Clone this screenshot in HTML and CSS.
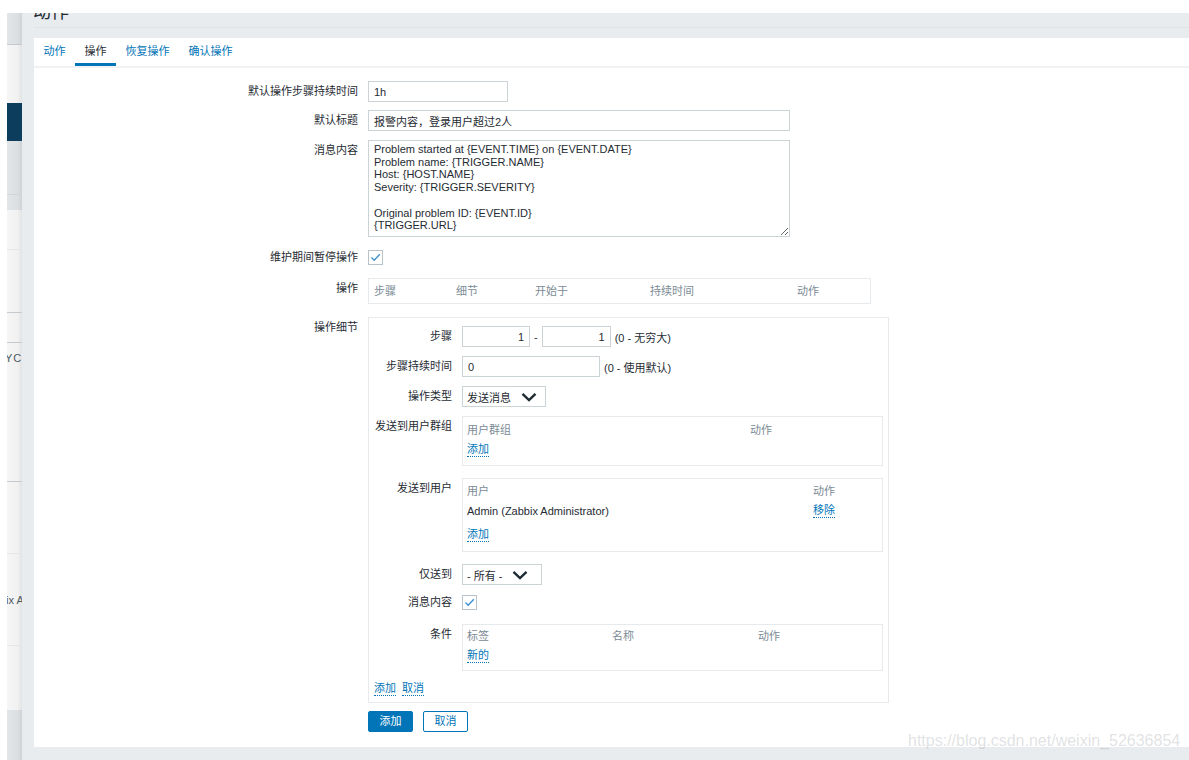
FILE: index.html
```html
<!DOCTYPE html>
<html lang="zh-CN">
<head>
<meta charset="utf-8">
<title>动作</title>
<link rel="stylesheet" href="styles.css">
</head>
<body>
<div class="page">
  <aside class="sidebar">
    <div class="sb sb-gray sb-h31 sb-line-dark"></div>
    <div class="sb sb-light sb-h58"></div>
    <div class="sb sb-blue"></div>
    <div class="sb sb-gray sb-h53 sb-line-mid"></div>
    <div class="sb sb-gray sb-h15"></div>
    <div class="sb sb-light sb-h39 sb-line-faint"></div>
    <div class="sb sb-light sb-h62 sb-line-dark"></div>
    <div class="sb sb-light sb-h29 sb-line-dark"></div>
    <div class="sb sb-light sb-h138 sb-line-dark"><span class="sb-text sb-text-1">YCl</span></div>
    <div class="sb sb-light sb-h71 sb-line-faint"></div>
    <div class="sb sb-light sb-h91 sb-line-faint"><span class="sb-text sb-text-2">ix A</span></div>
    <div class="sb sb-light sb-h64"></div>
    <div class="sb sb-gray sb-fill"></div>
  </aside>

  <main class="content">
    <header class="page-header"><h1 class="title">动作</h1></header>
    <div class="header-gap"></div>

    <section class="panel">
      <ul class="tabs">
        <li class="tab">动作</li>
        <li class="tab active">操作</li>
        <li class="tab">恢复操作</li>
        <li class="tab">确认操作</li>
      </ul>

      <div class="form">
        <div class="row">
          <div class="label">默认操作步骤持续时间</div>
          <div class="field"><input class="input w-140" value="1h" readonly></div>
        </div>

        <div class="row mt-8">
          <div class="label">默认标题</div>
          <div class="field"><input class="input w-422" value="报警内容，登录用户超过2人" readonly></div>
        </div>

        <div class="row mt-9">
          <div class="label">消息内容</div>
          <div class="field"><textarea class="textarea" readonly>Problem started at {EVENT.TIME} on {EVENT.DATE}
Problem name: {TRIGGER.NAME}
Host: {HOST.NAME}
Severity: {TRIGGER.SEVERITY}

Original problem ID: {EVENT.ID}
{TRIGGER.URL}</textarea></div>
        </div>

        <div class="row mt-10">
          <div class="label">维护期间暂停操作</div>
          <div class="field">
            <span class="checkbox"><svg width="13" height="13" viewBox="0 0 13 13"><polyline points="2.5,6.5 5.2,9.3 10.8,3.2" fill="none" stroke="#3b8fd0" stroke-width="1.3"/></svg></span>
          </div>
        </div>

        <div class="row mt-10">
          <div class="label">操作</div>
          <div class="field">
            <div class="box ops">
              <span class="th w-82">步骤</span><span class="th w-79">细节</span><span class="th w-115">开始于</span><span class="th w-147">持续时间</span><span class="th">动作</span>
            </div>
          </div>
        </div>

        <div class="row mt-13">
          <div class="label">操作细节</div>
          <div class="field">
            <div class="details">
              <div class="drow">
                <div class="label">步骤</div>
                <div class="field inline">
                  <input class="input num w-68" value="1" readonly><span class="dash">-</span><input class="input num w-69" value="1" readonly><span class="hint">(0 - 无穷大)</span>
                </div>
              </div>

              <div class="drow mt-9">
                <div class="label">步骤持续时间</div>
                <div class="field inline">
                  <input class="input w-138" value="0" readonly><span class="hint">(0 - 使用默认)</span>
                </div>
              </div>

              <div class="drow mt-9">
                <div class="label">操作类型</div>
                <div class="field">
                  <div class="select select-type"><span>发送消息</span><svg width="16" height="10" viewBox="0 0 16 10"><polyline points="1.5,1.8 8,8 14.5,1.8" fill="none" stroke="#1f2c33" stroke-width="2.4"/></svg></div>
                </div>
              </div>

              <div class="drow mt-9">
                <div class="label">发送到用户群组</div>
                <div class="field">
                  <div class="box inner group">
                    <div class="trow"><span class="th w-283">用户群组</span><span class="th">动作</span></div>
                    <div class="trow"><a class="link">添加</a></div>
                  </div>
                </div>
              </div>

              <div class="drow mt-12">
                <div class="label">发送到用户</div>
                <div class="field">
                  <div class="box inner users">
                    <div class="trow"><span class="th w-346">用户</span><span class="th">动作</span></div>
                    <div class="trow"><span class="td w-346">Admin (Zabbix Administrator)</span><a class="link">移除</a></div>
                    <div class="trow mt-4"><a class="link">添加</a></div>
                  </div>
                </div>
              </div>

              <div class="drow mt-12">
                <div class="label">仅送到</div>
                <div class="field">
                  <div class="select select-to"><span>- 所有 -</span><svg width="16" height="10" viewBox="0 0 16 10"><polyline points="1.5,1.8 8,8 14.5,1.8" fill="none" stroke="#1f2c33" stroke-width="2.4"/></svg></div>
                </div>
              </div>

              <div class="drow mt-7">
                <div class="label">消息内容</div>
                <div class="field">
                  <span class="checkbox"><svg width="13" height="13" viewBox="0 0 13 13"><polyline points="2.5,6.5 5.2,9.3 10.8,3.2" fill="none" stroke="#3b8fd0" stroke-width="1.3"/></svg></span>
                </div>
              </div>

              <div class="drow mt-11">
                <div class="label">条件</div>
                <div class="field">
                  <div class="box inner conds">
                    <div class="trow"><span class="th w-145">标签</span><span class="th w-146">名称</span><span class="th">动作</span></div>
                    <div class="trow"><a class="link">新的</a></div>
                  </div>
                </div>
              </div>

              <div class="links mt-11"><a class="link">添加</a><a class="link">取消</a></div>
            </div>
          </div>
        </div>

        <div class="row mt-8">
          <div class="label"></div>
          <div class="field buttons">
            <button class="btn btn-primary" type="button">添加</button>
            <button class="btn btn-secondary" type="button">取消</button>
          </div>
        </div>
      </div>
    </section>
  </main>
</div>
<div class="watermark">https://blog.csdn.net/weixin_52636854</div>
</body>
</html>
```

FILE: styles.css
```css
* { box-sizing: border-box; }

html, body {
  margin: 0;
  padding: 0;
}

body {
  width: 1189px;
  height: 760px;
  overflow: hidden;
  position: relative;
  background: #ffffff;
  font-family: "Liberation Sans", Arial, "Noto Sans CJK SC", sans-serif;
  font-size: 11px;
  color: #1f2c33;
}

.page {
  display: flex;
  margin-top: 13px;
  margin-left: 7px;
  height: 747px;
}

/* ---------- left sidebar strip ---------- */
.sidebar {
  width: 15px;
  flex: none;
  display: flex;
  flex-direction: column;
}

.sb { flex: none; overflow: hidden; white-space: nowrap; }
.sb-light { background: linear-gradient(to right, #f6f6f6 0%, #f1f1f1 70%, #e2e3e4 100%); }
.sb-gray { background: linear-gradient(to right, #e3e6e8 0%, #dcdfe2 70%, #cfd3d6 100%); }
.sb-blue { background: #0c3d5c; height: 38px; }
.sb-fill { flex: 1; }
.sb-line-dark { border-bottom: 1px solid #c5cace; }
.sb-line-mid { border-bottom: 1px solid #d2d6d9; }
.sb-line-faint { border-bottom: 1px solid #e4e6e8; }
.sb-h15 { height: 15px; }
.sb-h29 { height: 30px; }
.sb-h31 { height: 32px; }
.sb-h39 { height: 40px; }
.sb-h53 { height: 54px; }
.sb-h58 { height: 58px; }
.sb-h62 { height: 63px; }
.sb-h64 { height: 64px; }
.sb-h71 { height: 72px; }
.sb-h91 { height: 92px; }
.sb-h138 { height: 139px; }

.sb-text {
  display: block;
  font-size: 11px;
  line-height: 12px;
  color: #4b5862;
}
.sb-text-1 { margin-top: 9px; margin-left: -2px; letter-spacing: 1px; }
.sb-text-2 { margin-top: 40px; margin-left: -1px; }

/* ---------- content area ---------- */
.content {
  flex: 1;
  background: #e8ecef;
  padding-left: 12px;
  display: flex;
  flex-direction: column;
}

.page-header {
  height: 15px;
  border-bottom: 1px solid #dfe3e6;
  overflow: hidden;
}

.title {
  margin: -10px 0 0 -1px;
  font-size: 18px;
  line-height: 18px;
  font-weight: normal;
  color: #1f2c33;
}

.header-gap { height: 10px; }

.panel {
  background: #ffffff;
  height: 709px;
}

/* ---------- tabs ---------- */
.tabs {
  list-style: none;
  margin: 0;
  padding: 0;
  display: flex;
  height: 30px;
  border-bottom: 2px solid #f0f2f3;
}

.tab {
  position: relative;
  padding: 0 9.5px;
  height: 28px;
  line-height: 26px;
  color: #0275b8;
}

.tab.active { color: #1f2c33; }
.tab.active::after {
  content: "";
  position: absolute;
  left: 0;
  right: 0;
  bottom: 0;
  height: 3px;
  background: #0275b8;
}

/* ---------- form ---------- */
.form { padding-top: 13px; }

.row {
  display: grid;
  grid-template-columns: 324px max-content;
  column-gap: 10px;
  align-items: start;
}

.drow {
  display: grid;
  grid-template-columns: 83px max-content;
  column-gap: 10px;
  align-items: start;
}

.label {
  text-align: right;
  line-height: 21px;
  white-space: nowrap;
}

.field { min-height: 21px; }
.field.inline { display: flex; align-items: center; }

.mt-4 { margin-top: 4px; }
.mt-7 { margin-top: 7px; }
.mt-8 { margin-top: 8px; }
.mt-9 { margin-top: 9px; }
.mt-10 { margin-top: 10px; }
.mt-11 { margin-top: 11px; }
.mt-12 { margin-top: 12px; }
.mt-13 { margin-top: 13px; }

.input {
  display: block;
  height: 21px;
  margin: 0;
  padding: 0 5px;
  border: 1px solid #cbd3d7;
  border-radius: 0;
  background: #ffffff;
  font: inherit;
  color: #1f2c33;
  outline: none;
}
.input.num { text-align: right; }

.w-68 { width: 68px; }
.w-69 { width: 69px; }
.w-138 { width: 138px; }
.w-140 { width: 140px; }
.w-422 { width: 422px; }

.dash { margin: 0 4px; }
.hint { margin-left: 4px; white-space: nowrap; }

.textarea {
  display: block;
  width: 422px;
  height: 97px;
  margin: 0;
  padding: 2px 5px;
  border: 1px solid #cbd3d7;
  border-radius: 0;
  font: inherit;
  line-height: 12.7px;
  color: #1f2c33;
  resize: both;
  overflow: auto;
  outline: none;
}

.checkbox {
  display: flex;
  align-items: center;
  justify-content: center;
  width: 15px;
  height: 15px;
  margin-top: 3px;
  border: 1px solid #b9c4ca;
  background: #ffffff;
}

/* ---------- boxes / tables ---------- */
.box {
  border: 1px solid #e6eaec;
  background: #ffffff;
}

.ops {
  width: 503px;
  height: 26px;
  padding: 2px 0 2px 5px;
  display: flex;
  line-height: 20px;
}

.th { color: #7b8b95; white-space: nowrap; }
.td { white-space: nowrap; }

.w-79 { width: 79px; flex: none; }
.w-82 { width: 82px; flex: none; }
.w-115 { width: 115px; flex: none; }
.w-145 { width: 145px; flex: none; }
.w-146 { width: 146px; flex: none; }
.w-147 { width: 147px; flex: none; }
.w-283 { width: 283px; flex: none; }
.w-346 { width: 346px; flex: none; }

.details {
  width: 521px;
  border: 1px solid #e6eaec;
  padding: 8px 5px 6px 0;
}

.inner {
  width: 421px;
  padding-left: 4px;
}
.group { padding-top: 3px; padding-bottom: 5px; }
.users { padding-top: 2px; padding-bottom: 6px; }
.conds { padding-top: 1px; padding-bottom: 4px; }

.trow {
  display: flex;
  line-height: 20px;
  height: 20px;
}

.link {
  color: #0275b8;
  text-decoration: none;
  border-bottom: 1px dotted #0275b8;
  line-height: 13px;
  cursor: pointer;
}

.trow .link { align-self: center; }

.links {
  padding-left: 5px;
  line-height: 14px;
  height: 14px;
  display: flex;
  gap: 6px;
  align-items: flex-start;
}

/* ---------- selects ---------- */
.select {
  display: flex;
  align-items: center;
  justify-content: space-between;
  height: 21px;
  padding-left: 4px;
  border: 1px solid #cbd3d7;
  background: #ffffff;
  white-space: nowrap;
}
.select svg { flex: none; }
.select-type { width: 84px; padding-right: 8px; }
.select-to { width: 80px; padding-right: 13px; }

/* ---------- buttons ---------- */
.buttons { display: flex; gap: 10px; }

.btn {
  width: 45px;
  height: 21px;
  margin: 0;
  padding: 0;
  border-radius: 2px;
  font: inherit;
  line-height: 19px;
  cursor: pointer;
}
.btn-primary {
  background: #0275b8;
  border: 1px solid #0275b8;
  color: #ffffff;
}
.btn-secondary {
  background: #ffffff;
  border: 1px solid #0275b8;
  color: #0275b8;
}

/* ---------- watermark overlay ---------- */
.watermark {
  position: absolute;
  left: 908px;
  top: 732px;
  font-family: "Liberation Sans", Arial, sans-serif;
  font-size: 16px;
  line-height: 17px;
  color: rgba(150, 155, 160, 0.3);
  white-space: nowrap;
}
```
